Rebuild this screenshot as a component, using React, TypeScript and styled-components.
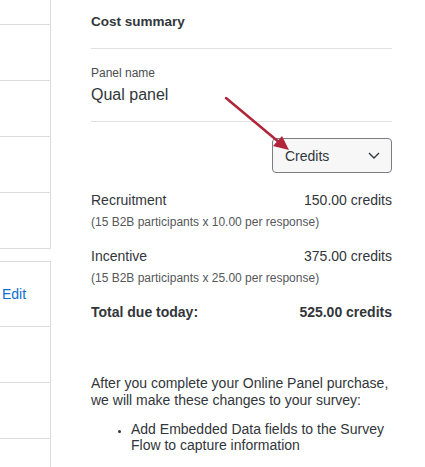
import React from "react";
import styled, { createGlobalStyle } from "styled-components";

const Global = createGlobalStyle`
  html, body {
    margin: 0;
    padding: 0;
    background: #ffffff;
  }
  body {
    font-family: "Liberation Sans", Arial, sans-serif;
    color: #32363a;
    -webkit-font-smoothing: antialiased;
  }
`;

const Page = styled.div`
  display: flex;
  width: 425px;
  height: 467px;
  overflow: hidden;
  position: relative;
`;

const SideColumn = styled.div`
  width: 51px;
  flex: none;
  display: flex;
  flex-direction: column;
`;

const SideCard = styled.div<{ $top?: boolean }>`
  border-right: 1px solid #dcdcdc;
  border-top: ${(p) => (p.$top ? "1px solid #dcdcdc" : "none")};
  border-bottom: 1px solid #dcdcdc;
  margin-top: ${(p) => (p.$top ? "12px" : "0")};
`;

const SideRow = styled.div<{ $h: number }>`
  height: ${(p) => p.$h}px;
  border-bottom: 1px solid #dcdcdc;
  display: flex;
  align-items: center;
  &:last-child {
    border-bottom: none;
  }
`;

const EditLink = styled.span`
  color: #0a6ed1;
  font-size: 14px;
  padding-left: 2px;
`;

const Summary = styled.div`
  flex: 1;
  padding: 0 33px 0 40px;
`;

const Header = styled.div`
  font-size: 13.5px;
  font-weight: 700;
  line-height: 20px;
  padding: 12px 0 16px;
  border-bottom: 1px solid #e1e1e1;
`;

const NameBlock = styled.div`
  padding: 16px 0 15px;
  border-bottom: 1px solid #e1e1e1;
`;

const Label = styled.div`
  font-size: 12px;
  line-height: 16px;
  color: #4a4d50;
`;

const Name = styled.div`
  font-size: 16px;
  line-height: 22px;
  margin-top: 3px;
`;

const SelectRow = styled.div`
  display: flex;
  justify-content: flex-end;
  margin-top: 16px;
`;

const Select = styled.div`
  width: 120px;
  height: 35px;
  box-sizing: border-box;
  border: 1px solid #7a7d80;
  border-radius: 4px;
  background: #f7f7f7;
  display: flex;
  align-items: center;
  justify-content: space-between;
  padding: 0 11px 0 12px;
  font-size: 14px;
`;

const Item = styled.div<{ $gap: number }>`
  margin-top: ${(p) => p.$gap}px;
`;

const Line = styled.div<{ $bold?: boolean }>`
  display: flex;
  justify-content: space-between;
  font-size: 14px;
  line-height: 20px;
  font-weight: ${(p) => (p.$bold ? 700 : 400)};
`;

const Sub = styled.div`
  font-size: 12px;
  line-height: 16px;
  color: #55585b;
  margin-top: 4px;
`;

const Para = styled.p`
  font-size: 14px;
  line-height: 16.5px;
  margin: 53px 0 0;
`;

const List = styled.ul`
  font-size: 14px;
  line-height: 16px;
  margin: 13px 0 0;
  padding-left: 40px;
  li::marker {
    font-size: 11px;
  }
`;

const Arrow = styled.svg`
  position: absolute;
  left: 0;
  top: 0;
  pointer-events: none;
`;

export default function App() {
  return (
    <Page>
      <Global />
      <SideColumn>
        <SideCard>
          <SideRow $h={24} />
          <SideRow $h={55} />
          <SideRow $h={55} />
          <SideRow $h={55} />
          <SideRow $h={55} />
        </SideCard>
        <SideCard $top>
          <SideRow $h={64}>
            <EditLink>Edit</EditLink>
          </SideRow>
          <SideRow $h={55} />
          <SideRow $h={55} />
          <SideRow $h={55} />
        </SideCard>
      </SideColumn>
      <Summary>
        <Header>Cost summary</Header>
        <NameBlock>
          <Label>Panel name</Label>
          <Name>Qual panel</Name>
        </NameBlock>
        <SelectRow>
          <Select>
            <span>Credits</span>
            <svg width="12" height="7" viewBox="0 0 12 7">
              <path d="M1 1l5 5 5-5" fill="none" stroke="#32363a" strokeWidth="1.4" />
            </svg>
          </Select>
        </SelectRow>
        <Item $gap={17}>
          <Line>
            <span>Recruitment</span>
            <span>150.00 credits</span>
          </Line>
          <Sub>(15 B2B participants x 10.00 per response)</Sub>
        </Item>
        <Item $gap={16}>
          <Line>
            <span>Incentive</span>
            <span>375.00 credits</span>
          </Line>
          <Sub>(15 B2B participants x 25.00 per response)</Sub>
        </Item>
        <Item $gap={16}>
          <Line $bold>
            <span>Total due today:</span>
            <span>525.00 credits</span>
          </Line>
        </Item>
        <Para>
          After you complete your Online Panel purchase, we will make these changes to your survey:
        </Para>
        <List>
          <li>Add Embedded Data fields to the Survey Flow to capture information</li>
        </List>
      </Summary>
      <Arrow width="425" height="467" viewBox="0 0 425 467">
        <line x1="226" y1="98" x2="280" y2="143" stroke="#b2243a" strokeWidth="2.5" strokeLinecap="round" />
        <path d="M289 150 L273 146 L282 136 Z" fill="#b2243a" />
      </Arrow>
    </Page>
  );
}
